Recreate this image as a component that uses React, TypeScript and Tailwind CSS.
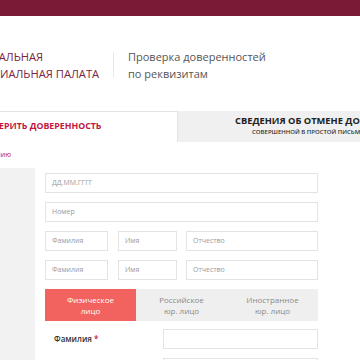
import React from "react";

const Field: React.FC<{ placeholder: string; className?: string }> = ({ placeholder, className = "" }) => (
  <div
    className={`h-[20px] border border-[#e3e3e3] bg-white flex items-center px-[6px] text-[7px] text-[#9a9a9a] ${className}`}
  >
    {placeholder}
  </div>
);

const App: React.FC = () => {
  return (
    <div className="w-[360px] h-[360px] overflow-hidden bg-white font-['Open_Sans',sans-serif] flex flex-col">
      <div className="h-[16px] shrink-0 bg-[#7b1a37]" />

      <header className="h-[95px] shrink-0 flex items-start pt-[32px]">
        <div className="-ml-[37px] w-[150px] shrink-0 text-[11.2px] leading-[17px] text-[#7b2342] whitespace-nowrap">
          ФЕДЕРАЛЬНАЯ
          <br />
          НОТАРИАЛЬНАЯ ПАЛАТА
        </div>
        <div className="w-px h-[26px] mt-[4px] bg-[#e8e8e8]" />
        <div className="ml-[14px] text-[11px] leading-[17px] text-[#555] whitespace-nowrap">
          Проверка доверенностей
          <br />
          по реквизитам
        </div>
      </header>

      <div className="h-[31px] shrink-0 flex">
        <div className="w-[178px] shrink-0 border-t border-r border-[#e4e4e4] flex items-center overflow-hidden">
          <span className="-ml-[26px] text-[8.8px] font-bold text-[#c3173f] whitespace-nowrap">
            ПРОВЕРИТЬ ДОВЕРЕННОСТЬ
          </span>
        </div>
        <div className="flex-1 bg-[#f0f0f0] flex items-center overflow-hidden">
          <div className="ml-[57px] -mt-[2px] inline-flex flex-col items-center whitespace-nowrap leading-none">
            <span className="text-[9.3px] font-bold text-[#222]">СВЕДЕНИЯ ОБ ОТМЕНЕ ДОВЕРЕННОСТИ</span>
            <span className="mt-[3px] text-[6px] font-semibold text-[#333]">
              СОВЕРШЕННОЙ В ПРОСТОЙ ПИСЬМЕННОЙ ФОРМЕ
            </span>
          </div>
        </div>
      </div>

      <div className="h-[26px] shrink-0 flex items-center">
        <div className="w-[11px] overflow-hidden flex justify-end">
          <span className="text-[7px] text-[#c3173f] whitespace-nowrap">по наименованию</span>
        </div>
      </div>

      <div className="flex-1 flex">
        <aside className="w-[35px] shrink-0 bg-[#f2f2f2]" />
        <main className="ml-[10px] w-[273px] pt-[5px] flex flex-col">
          <Field placeholder="ДД.ММ.ГГГГ" />
          <Field placeholder="Номер" className="mt-[9px]" />
          <div className="mt-[9px] flex">
            <Field placeholder="Фамилия" className="w-[63px]" />
            <Field placeholder="Имя" className="w-[59px] ml-[10px]" />
            <Field placeholder="Отчество" className="w-[132px] ml-[9px]" />
          </div>
          <div className="mt-[9px] flex">
            <Field placeholder="Фамилия" className="w-[63px]" />
            <Field placeholder="Имя" className="w-[59px] ml-[10px]" />
            <Field placeholder="Отчество" className="w-[132px] ml-[9px]" />
          </div>

          <div className="mt-[9px] h-[32px] grid grid-cols-3 bg-[#efefef] text-[8px] leading-[11px] text-center">
            <div className="bg-[#f2625e] text-white flex items-center justify-center">
              Физическое
              <br />
              лицо
            </div>
            <div className="text-[#8a8a8a] flex items-center justify-center">
              Российское
              <br />
              юр. лицо
            </div>
            <div className="text-[#8a8a8a] flex items-center justify-center">
              Иностранное
              <br />
              юр. лицо
            </div>
          </div>

          <div className="mt-[8px] flex items-center">
            <span className="w-[118px] pl-[9px] text-[8px] font-semibold text-[#333]">
              Фамилия <span className="text-[#c3173f]">*</span>
            </span>
            <div className="h-[20px] w-[155px] border border-[#e3e3e3]" />
          </div>
          <div className="mt-[9px] flex">
            <div className="ml-[118px] h-[20px] w-[155px] border border-[#e3e3e3]" />
          </div>
        </main>
      </div>
    </div>
  );
};

export default App;
